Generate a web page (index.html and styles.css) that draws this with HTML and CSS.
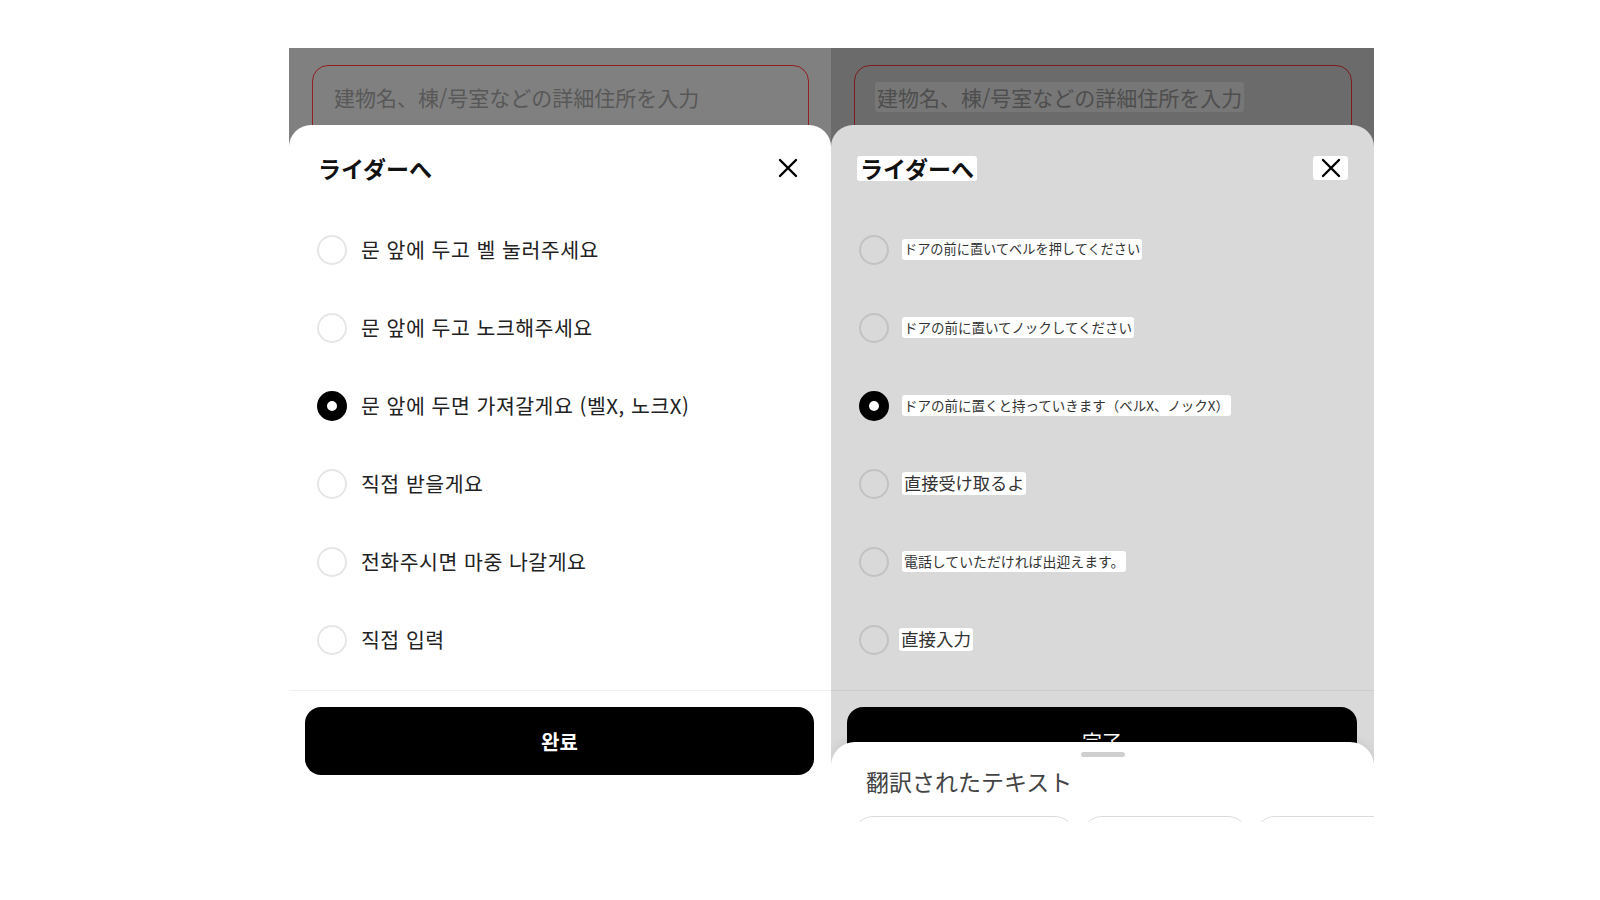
FILE: index.html
```html
<!DOCTYPE html>
<html lang="ko">
<head>
  <meta charset="UTF-8" />
  <meta name="viewport" content="width=device-width, initial-scale=1.0">
  <title>ライダーへ</title>
  <link rel="stylesheet" href="styles.css">
</head>
<body>

  <div class="screens">

    <!-- Original (Korean) -->
    <div class="screen">
      <div class="top">
        <div class="addr">建物名、棟/号室などの詳細住所を入力</div>
      </div>
      <div class="sheet">
        <div class="sheet-head">
          <span class="title">ライダーへ</span>
          <span class="close">
            <svg width="20" height="20" viewBox="0 0 20 20"><path d="M2 2L18 18M18 2L2 18" stroke="#000" stroke-width="2.4" stroke-linecap="round"/></svg>
          </span>
        </div>
        <div class="options">
          <div class="opt"><span class="radio"></span><span class="label">문 앞에 두고 벨 눌러주세요</span></div>
          <div class="opt"><span class="radio"></span><span class="label">문 앞에 두고 노크해주세요</span></div>
          <div class="opt"><span class="radio on"></span><span class="label">문 앞에 두면 가져갈게요 (벨X, 노크X)</span></div>
          <div class="opt"><span class="radio"></span><span class="label">직접 받을게요</span></div>
          <div class="opt"><span class="radio"></span><span class="label">전화주시면 마중 나갈게요</span></div>
          <div class="opt"><span class="radio"></span><span class="label">직접 입력</span></div>
        </div>
        <div class="sheet-line"></div>
        <div class="sheet-foot">
          <button class="done">완료</button>
        </div>
      </div>
    </div>

    <!-- Translated (Japanese) -->
    <div class="screen tr">
      <div class="top">
        <div class="addr"><span class="hl-dark">建物名、棟/号室などの詳細住所を入力</span></div>
      </div>
      <div class="sheet">
        <div class="sheet-head">
          <span class="title hl">ライダーへ</span>
          <span class="close hl">
            <svg width="20" height="20" viewBox="0 0 20 20"><path d="M2 2L18 18M18 2L2 18" stroke="#000" stroke-width="2.4" stroke-linecap="round"/></svg>
          </span>
        </div>
        <div class="options">
          <div class="opt"><span class="radio"></span><span class="label hl small s1">ドアの前に置いてベルを押してください</span></div>
          <div class="opt"><span class="radio"></span><span class="label hl small">ドアの前に置いてノックしてください</span></div>
          <div class="opt"><span class="radio on"></span><span class="label hl small">ドアの前に置くと持っていきます（ベルX、ノックX）</span></div>
          <div class="opt"><span class="radio"></span><span class="label hl big">直接受け取るよ</span></div>
          <div class="opt"><span class="radio"></span><span class="label hl small s5">電話していただければ出迎えます。</span></div>
          <div class="opt"><span class="radio"></span><span class="label hl big tight">直接入力</span></div>
        </div>
        <div class="sheet-line"></div>
        <div class="sheet-foot">
          <button class="done">完了</button>
        </div>
      </div>

      <div class="lens">
        <div class="handle"></div>
        <div class="lens-title">翻訳されたテキスト</div>
        <div class="chips">
          <span class="chip c1"></span>
          <span class="chip c2"></span>
          <span class="chip c3"></span>
        </div>
      </div>
    </div>

  </div>

</body>
</html>
```

FILE: styles.css
```css
body {
  margin: 0;
  background: #fff;
  font-family: "Noto Sans CJK KR", "Noto Sans CJK JP", "Noto Sans", sans-serif;
  color: #222;
}

.screens {
  display: flex;
  padding: 48px 0 0 289px;
}

.screen {
  width: 542px;
  height: 774px;
  display: flex;
  flex-direction: column;
  background: #808080;
  position: relative;
  overflow: hidden;
}

.screen.tr {
  width: 543px;
  background: #6b6b6b;
}

/* dimmed page behind the sheet */
.top {
  height: 77px;
  overflow: hidden;
  padding: 17px 22px 0 23px;
  box-sizing: border-box;
}

.addr {
  height: 80px;
  box-sizing: border-box;
  border: 1.5px solid #931f22;
  border-radius: 16px;
  padding: 16px 0 0 21px;
  font-family: "Noto Sans CJK JP", sans-serif;
  font-size: 21px;
  line-height: 30px;
  color: #585858;
  white-space: nowrap;
}

.tr .addr {
  border-color: #7c1a1c;
  padding-left: 20px;
  color: #4e4e4e;
}

.hl-dark {
  background: #777;
  border-radius: 3px;
  padding: 0 2px;
}

/* bottom sheet */
.sheet {
  flex: 1;
  display: flex;
  flex-direction: column;
  background: #fff;
  border-radius: 22px 22px 0 0;
}

.tr .sheet {
  background: #d9d9d9;
}

.sheet-head {
  display: flex;
  justify-content: space-between;
  align-items: center;
  height: 30px;
  padding: 28px 33px 0 29px;
}

.tr .sheet-head {
  padding: 28px 26px 0 26px;
}

.title {
  font-family: "Noto Sans CJK JP", sans-serif;
  font-weight: bold;
  font-size: 23px;
  line-height: 25px;
  color: #111;
}

.close {
  display: flex;
}

.close svg {
  display: block;
}

.hl {
  background: #fff;
  border-radius: 3px;
}

.title.hl {
  padding: 0 3px;
}

.close.hl {
  padding: 2px 7px 2px 8px;
}

.options {
  margin-top: 28px;
}

.opt {
  display: flex;
  align-items: center;
  height: 78px;
  padding-left: 28px;
  gap: 14px;
}

.tr .opt {
  gap: 13px;
}

.radio {
  width: 30px;
  height: 30px;
  box-sizing: border-box;
  border: 2px solid #e6e6e6;
  border-radius: 50%;
  flex-shrink: 0;
}

.tr .radio {
  border-color: #c2c2c2;
}

.radio.on,
.tr .radio.on {
  border: 10px solid #000;
  background: #fff;
}

.label {
  font-size: 20.5px;
  line-height: 28px;
  letter-spacing: 0.5px;
  color: #222;
  margin-top: -2px;
}

.label.small {
  font-family: "Noto Sans CJK JP", sans-serif;
  font-size: 13.5px;
  line-height: 18px;
  letter-spacing: 0;
  padding: 1px 2px 2px;
  margin-top: -1px;
  color: #333;
}

.label.s1 { font-size: 13.2px; }
.label.s5 { font-size: 13.9px; }

.label.big {
  font-family: "Noto Sans CJK JP", sans-serif;
  font-size: 17.2px;
  line-height: 22px;
  letter-spacing: 0;
  padding: 0 2px 1px;
  margin-top: -1px;
  color: #333;
}

.label.tight {
  margin-left: -3px;
  font-size: 17.5px;
}

.sheet-line {
  height: 1px;
  background: #f0f0f0;
  margin-top: 11px;
}

.tr .sheet-line {
  background: #cdcdcd;
}

.sheet-foot {
  padding: 16px 17px 0 16px;
}

.done {
  display: block;
  width: 100%;
  height: 68px;
  border: none;
  border-radius: 16px;
  background: #000;
  color: #fff;
  font-family: "Noto Sans CJK KR", "Noto Sans CJK JP", sans-serif;
  font-weight: bold;
  font-size: 20px;
  padding: 0;
}

.tr .done {
  font-weight: normal;
}

/* translation result sheet */
.lens {
  position: absolute;
  left: 0;
  right: 0;
  top: 694px;
  bottom: 0;
  background: #fff;
  border-radius: 24px 24px 0 0;
  box-shadow: 0 -2px 8px rgba(0, 0, 0, 0.08);
  overflow: hidden;
}

.handle {
  width: 44px;
  height: 5px;
  border-radius: 3px;
  background: #cfcfcf;
  margin: 10px auto 0;
}

.lens-title {
  font-family: "Noto Sans CJK JP", sans-serif;
  font-size: 23px;
  line-height: 30px;
  color: #444;
  padding-left: 35px;
  margin-top: 9px;
}

.chips {
  display: flex;
  gap: 7px;
  padding-left: 22px;
  margin-top: 20px;
}

.chip {
  flex-shrink: 0;
  height: 40px;
  border: 1px solid #dcdcdc;
  border-radius: 20px;
}

.c1 { width: 220px; }
.c2 { width: 164px; }
.c3 { width: 170px; }
```
